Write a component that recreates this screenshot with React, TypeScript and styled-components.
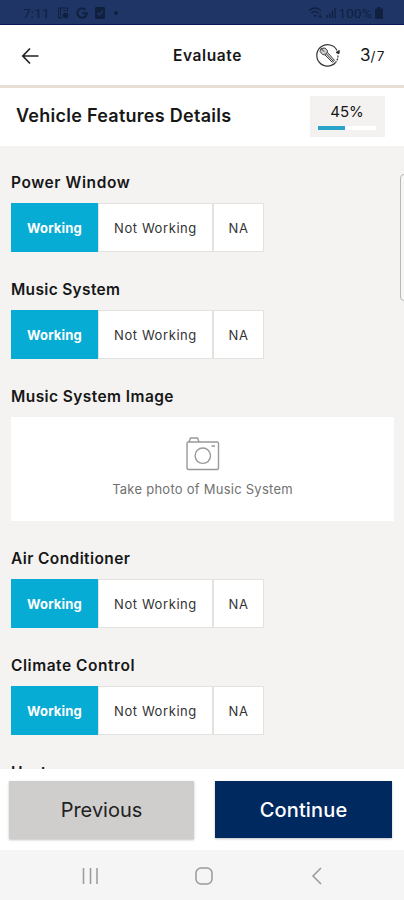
import React from "react";
import styled, { createGlobalStyle } from "styled-components";

const GlobalStyle = createGlobalStyle`
  * { box-sizing: border-box; }
  body { margin: 0; font-family: Inter, "Liberation Sans", sans-serif; color: #171717; }
  button { font-family: inherit; padding: 0; margin: 0; }
  svg { display: block; flex: none; }
`;

const Screen = styled.div`
  width: 404px;
  height: 900px;
  display: flex;
  flex-direction: column;
  overflow: hidden;
  background: #fff;
`;

const StatusBar = styled.div`
  height: 25px;
  flex: none;
  display: flex;
  justify-content: space-between;
  align-items: center;
  padding: 1px 21px 0 23px;
  background: #1e3566;
  border-bottom: 1px solid #0b1654;
  color: #11203f;
`;

const StatusGroup = styled.div<{ $gap: number }>`
  display: flex;
  align-items: center;
  gap: ${(p) => p.$gap}px;
`;

const StatusText = styled.span`
  font-family: Roboto, sans-serif;
  font-size: 13.5px;
  line-height: 16px;
  letter-spacing: 0.2px;
`;

const Header = styled.header`
  height: 63px;
  flex: none;
  display: grid;
  grid-template-columns: 150px 1fr 150px;
  align-items: center;
  padding-top: 1px;
  border-bottom: 3px solid #e8dfd6;
`;

const BackButton = styled.button`
  width: 20px;
  margin-left: 21px;
  border: 0;
  background: none;
`;

const HeaderTitle = styled.h1`
  margin: 0 0 0 23px;
  font-size: 15.5px;
  line-height: 20px;
  font-weight: 600;
  letter-spacing: 0.6px;
`;

const HeaderTools = styled.div`
  display: flex;
  align-items: center;
  justify-content: flex-end;
  gap: 20px;
  padding-right: 19px;
`;

const StepCount = styled.span`
  width: 25px;
  font-size: 17px;
  line-height: 20px;
  white-space: nowrap;
  small { font-size: 13.5px; letter-spacing: 1.4px; }
`;

const TitleRow = styled.div`
  height: 58px;
  flex: none;
  display: flex;
  align-items: center;
  justify-content: space-between;
  padding: 0 19px 2px 16px;
`;

const PageTitle = styled.h2`
  margin: 0;
  font-size: 18px;
  line-height: 24px;
  font-weight: 600;
  letter-spacing: 0.27px;
`;

const ProgressCard = styled.div`
  width: 75px;
  height: 41px;
  padding: 5px 9px 0 8px;
  background: #f3f2f1;
`;

const ProgressText = styled.div`
  height: 22px;
  font-size: 15px;
  line-height: 22px;
  text-align: center;
`;

const ProgressTrack = styled.div`
  height: 4px;
  margin-top: 3px;
  background: #fff;
`;

const ProgressFill = styled.div`
  width: 46%;
  height: 100%;
  background: #29a5cc;
`;

const FormPanel = styled.main`
  flex: 1;
  min-height: 0;
  overflow: hidden;
  position: relative;
  padding: 26px 10px 0 11px;
  background: #f4f3f2;
`;

const ScrollHandle = styled.div`
  position: absolute;
  top: 28px;
  right: -5px;
  width: 9px;
  height: 127px;
  border: 1px solid #b8b8b8;
  border-radius: 4px;
  background: #f6f6f5;
`;

const Field = styled.section<{ $tall?: boolean }>`
  height: ${(p) => (p.$tall ? 162 : 107)}px;
`;

const FieldLabel = styled.h3<{ $spacing: number }>`
  margin: 0 0 9px;
  font-size: 15.5px;
  line-height: 22px;
  font-weight: 600;
  letter-spacing: ${(p) => p.$spacing}px;
`;

const Options = styled.div`
  display: flex;
  width: 253px;
  height: 49px;
`;

const Option = styled.button<{ $width: number; $selected?: boolean }>`
  width: ${(p) => p.$width}px;
  border: 1px solid ${(p) => (p.$selected ? "#06acd4" : "#e4e2df")};
  background: ${(p) => (p.$selected ? "#06acd4" : "#fff")};
  color: ${(p) => (p.$selected ? "#fff" : "#333")};
  font-size: 13px;
  font-weight: ${(p) => (p.$selected ? 700 : 400)};
  letter-spacing: ${(p) => (p.$selected ? 0.2 : 0.58)}px;
  & + & { border-left-color: ${(p) => (p.$width < 60 ? "#e4e2df" : "#fff")}; }
`;

const PhotoCard = styled.button`
  display: flex;
  flex-direction: column;
  align-items: center;
  width: 383px;
  height: 104px;
  padding-top: 20px;
  border: 0;
  background: #fff;
  color: #717171;
  font-size: 13px;
  line-height: 18px;
  letter-spacing: 0.25px;
`;

const PhotoCaption = styled.span`
  margin-top: 9px;
`;

const Footer = styled.footer`
  height: 81px;
  flex: none;
  display: flex;
  justify-content: space-between;
  padding: 12px 12px 0 9px;
`;

const FooterButton = styled.button<{ $primary?: boolean }>`
  width: ${(p) => (p.$primary ? 177 : 185)}px;
  height: ${(p) => (p.$primary ? 57 : 58)}px;
  border: 0;
  box-shadow: 0 1px 2px #9999;
  background: ${(p) => (p.$primary ? "#00295f" : "#cfcecd")};
  color: ${(p) => (p.$primary ? "#fff" : "#222")};
  font-size: 20px;
  font-weight: ${(p) => (p.$primary ? 500 : 400)};
  letter-spacing: ${(p) => (p.$primary ? 0.15 : 0)}px;
`;

const NavBar = styled.nav`
  height: 50px;
  flex: none;
  display: flex;
  justify-content: space-between;
  align-items: center;
  padding: 2px 81px 0 79px;
  background: #f5f5f5;
`;

const ChoiceField = ({ label, spacing }: { label: string; spacing: number }) => (
  <Field>
    <FieldLabel $spacing={spacing}>{label}</FieldLabel>
    <Options>
      <Option $width={87} $selected>Working</Option>
      <Option $width={115}>Not Working</Option>
      <Option $width={51}>NA</Option>
    </Options>
  </Field>
);

const NoteIcon = () => (
  <svg width="12" height="12" viewBox="0 0 12 12" fill="none" stroke="currentColor" strokeWidth="1">
    <path d="M5 11H1.5V1h9v4M3.5 1v10M6 3.5h3" />
    <circle cx="8.5" cy="8.5" r="2.5" fill="currentColor" />
  </svg>
);

const GoogleIcon = () => (
  <svg width="12" height="12" viewBox="0 0 12 12" fill="none" stroke="currentColor" strokeWidth="2">
    <path d="M9.5 2.8A4.7 4.7 0 1 0 10.8 6.2H6.2" />
  </svg>
);

const CheckIcon = () => (
  <svg width="10" height="12" viewBox="0 0 10 12">
    <rect width="10" height="12" rx="1" fill="currentColor" />
    <path d="m2.5 6 1.8 2L8 3.8" fill="none" stroke="#1e3566" strokeWidth="1.3" />
  </svg>
);

const WifiIcon = () => (
  <svg width="15" height="13" viewBox="0 0 15 13" fill="none" stroke="currentColor" strokeWidth="1.4">
    <path d="M1 4.5q6-5 12 0M3.5 7q3.5-3 7 0" />
    <path d="m6 9 1.2 1.5L8.5 9" />
    <path d="M12 8v4m-1.5-1.5L12 12l1.5-1.5" strokeWidth="1" />
  </svg>
);

const SignalIcon = () => (
  <svg width="10" height="11" viewBox="0 0 10 11" stroke="currentColor" strokeWidth="1.3">
    <path d="M1 11V8m2.7 3V6m2.7 5V3.5M9 11V1" />
  </svg>
);

const BatteryIcon = () => (
  <svg width="8" height="12" viewBox="0 0 8 12" fill="currentColor">
    <path d="M2.5 0h3v1.5H7l1 1V11q0 1-1 1H1q-1 0-1-1V2.5l1-1h1.5z" />
  </svg>
);

const DotIcon = () => (
  <svg width="6" height="4" viewBox="0 0 6 4"><circle cx="4" cy="2" r="2" fill="currentColor" /></svg>
);

const ArrowIcon = () => (
  <svg width="20" height="20" viewBox="0 0 20 20" fill="none" stroke="#222" strokeWidth="1.7">
    <path d="M17.5 10H2M9 2.5 1.8 10 9 17.5" />
  </svg>
);

const InspectIcon = () => (
  <svg width="25" height="25" viewBox="0 0 25 25" fill="none" stroke="#333" strokeWidth="1">
    <path d="M22 7.5A10.7 10.7 0 1 0 20.5 19.5" strokeWidth="1.2" />
    <path d="M23 12.5A10.7 10.7 0 0 1 20.5 19.5" strokeDasharray="2 1" strokeWidth="1.2" />
    <path d="m21 9.5 3 1.2.3-3.2z" fill="#222" />
    <path d="m9.8 11.700 2.400-2.400 7.300 8-2.200 2z" fill="#eee" />
    <path d="m11.500 11 6.500 7" />
    <path d="M6 5.500 10 5l2.500 2.500-.3 2-2.400 2.300-2.300-.3L5 8.500z" fill="#ccc" strokeWidth="0.9" />
    <path d="m6.500 6 2.500 2.500" />
  </svg>
);

const CameraIcon = () => (
  <svg width="34" height="34" viewBox="0 0 34 34" fill="none" stroke="#999" strokeWidth="1.4">
    <rect x="1" y="5" width="31.5" height="27.5" rx="1.5" />
    <path d="M3 5 4.5 1h7L13 5M25.5 9H29" />
    <circle cx="16.8" cy="18.7" r="7.7" />
  </svg>
);

export default function App() {
  return (
    <>
      <GlobalStyle />
      <Screen>
        <StatusBar>
          <StatusGroup $gap={7}>
            <StatusText>7:11</StatusText>
            <NoteIcon />
            <GoogleIcon />
            <CheckIcon />
            <DotIcon />
          </StatusGroup>
          <StatusGroup $gap={3}>
            <WifiIcon />
            <SignalIcon />
            <StatusText>100%</StatusText>
            <BatteryIcon />
          </StatusGroup>
        </StatusBar>
        <Header>
          <BackButton aria-label="Back"><ArrowIcon /></BackButton>
          <HeaderTitle>Evaluate</HeaderTitle>
          <HeaderTools>
            <InspectIcon />
            <StepCount>3<small>/7</small></StepCount>
          </HeaderTools>
        </Header>
        <TitleRow>
          <PageTitle>Vehicle Features Details</PageTitle>
          <ProgressCard>
            <ProgressText>45%</ProgressText>
            <ProgressTrack><ProgressFill /></ProgressTrack>
          </ProgressCard>
        </TitleRow>
        <FormPanel>
          <ChoiceField label="Power Window" spacing={0.58} />
          <ChoiceField label="Music System" spacing={0.32} />
          <Field $tall>
            <FieldLabel $spacing={0.42}>Music System Image</FieldLabel>
            <PhotoCard>
              <CameraIcon />
              <PhotoCaption>Take photo of Music System</PhotoCaption>
            </PhotoCard>
          </Field>
          <ChoiceField label="Air Conditioner" spacing={0.4} />
          <ChoiceField label="Climate Control" spacing={0.54} />
          <FieldLabel $spacing={0}>Heater</FieldLabel>
          <ScrollHandle />
        </FormPanel>
        <Footer>
          <FooterButton>Previous</FooterButton>
          <FooterButton $primary>Continue</FooterButton>
        </Footer>
        <NavBar>
          <svg width="20" height="18" viewBox="0 0 20 18" stroke="#999" strokeWidth="1.5">
            <path d="M4.5 1v16M11.5 1v16M18 1v16" />
          </svg>
          <svg width="18" height="18" viewBox="0 0 18 18" fill="none" stroke="#999" strokeWidth="1.5">
            <rect x="1" y="1" width="16" height="16" rx="5" />
          </svg>
          <svg width="14" height="18" viewBox="0 0 14 18" fill="none" stroke="#999" strokeWidth="1.5">
            <path d="M12 1 4 9l8 8" />
          </svg>
        </NavBar>
      </Screen>
    </>
  );
}
